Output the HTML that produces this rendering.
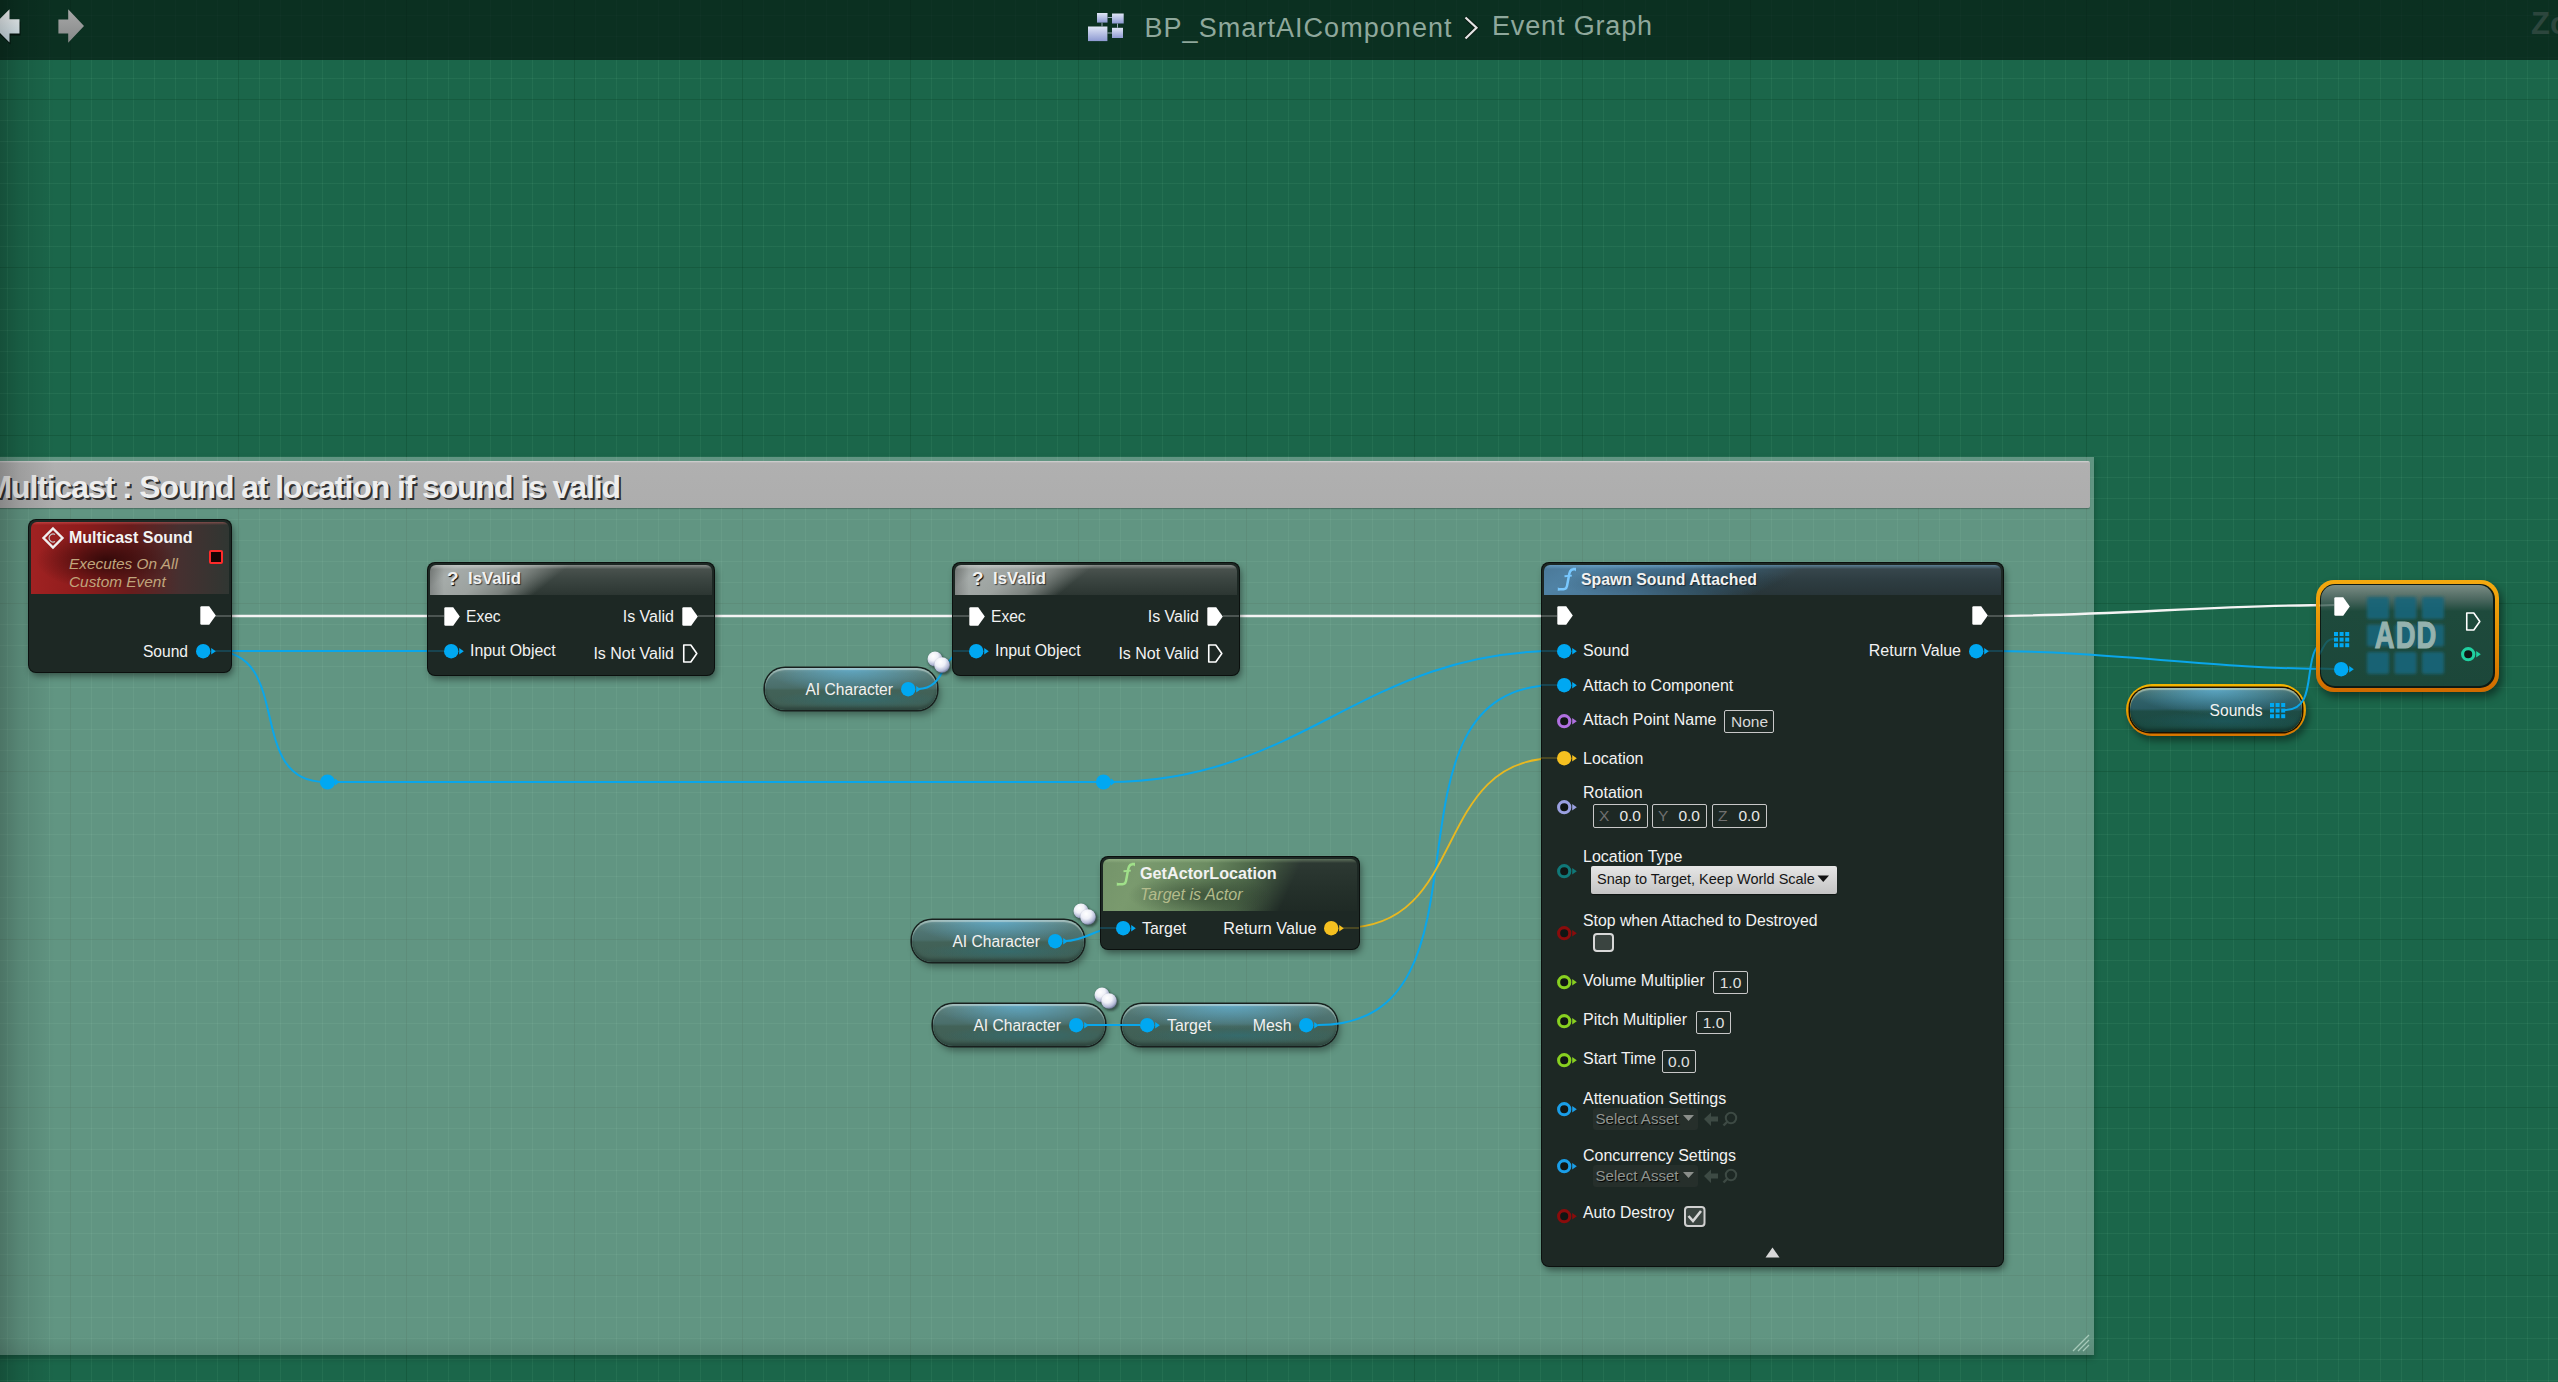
<!DOCTYPE html><html><head><meta charset="utf-8"><style>
html,body{margin:0;padding:0;}
body{width:2558px;height:1382px;overflow:hidden;position:relative;background:#1b664a;font-family:"Liberation Sans",sans-serif;}
.t{position:absolute;white-space:nowrap;}
.a{position:absolute;}
#grid{position:absolute;left:0;top:0;width:2558px;height:1382px;
 background-image:
  linear-gradient(to right, rgba(0,60,35,0.4) 0 1px, transparent 1px),
  linear-gradient(to bottom, rgba(0,60,35,0.4) 0 1px, transparent 1px),
  linear-gradient(to right, rgba(120,200,160,0.09) 0 1px, transparent 1px),
  linear-gradient(to bottom, rgba(120,200,160,0.09) 0 1px, transparent 1px);
 background-size:168px 168px,168px 168px,21px 21px,21px 21px;
 background-position:70px 0,0 99px,7px 0,0 15px;}
#vig{position:absolute;left:0;top:0;width:2558px;height:1382px;
 background:linear-gradient(to right, rgba(0,0,0,0.22), rgba(0,0,0,0.1) 20px, rgba(0,0,0,0) 55px);}
#topbar{position:absolute;left:0;top:0;width:2558px;height:60px;background:rgba(5,22,15,0.68);}
#comment{position:absolute;left:-10px;top:457px;width:2104px;height:898px;background:linear-gradient(to top,rgba(0,0,0,0.07),rgba(0,0,0,0) 20px),rgba(255,255,255,0.31);box-shadow:0 3px 6px rgba(0,0,0,0.25);}
#chead{position:absolute;left:-10px;top:461px;width:2100px;height:47px;background:linear-gradient(to bottom,#d4d4d4 0,#b0b0b0 2px,#adadad 100%);border-radius:0 2px 2px 0;box-shadow:0 1px 1px rgba(0,0,0,0.25);}
.node{position:absolute;background:#1d2824;border-radius:7px;box-shadow:0 0 0 1px #0b100e, 2px 4px 7px rgba(0,0,0,0.45);}
.hdr{position:absolute;left:2px;right:2px;top:2px;border-radius:6px 6px 0 0;}
.lbl{color:#f2f2f2;}
.box{position:absolute;border:1.5px solid #c8c8c8;border-radius:2px;box-sizing:border-box;}
.var{position:absolute;border-radius:20px;box-shadow:0 0 0 1.6px #18201e, inset 0 2px 1px rgba(215,230,225,0.5), inset 0 -3px 3px rgba(0,0,0,0.2), 3px 5px 7px rgba(0,0,0,0.35);
 background:radial-gradient(ellipse 50% 60% at 50% 0%, rgba(95,180,220,0.75), rgba(95,180,220,0) 100%),
  radial-gradient(ellipse 50% 22% at 55% 75%, rgba(40,120,135,0.45), rgba(40,120,135,0) 100%),
  linear-gradient(to bottom, #74908a 0, #5a7c76 12%, #4f7472 30%, #4a6e6a 47%, #426258 53%, #405f55 85%, #3a574e 100%);}
.var.sel{box-shadow:0 0 0 1.5px #1a1000, inset 0 2px 1px rgba(215,225,200,0.55), inset 0 -3px 3px rgba(0,0,0,0.25);
 background:radial-gradient(ellipse 50% 60% at 50% 0%, rgba(95,180,220,0.8), rgba(95,180,220,0) 100%),
  radial-gradient(ellipse 50% 22% at 55% 75%, rgba(30,100,115,0.45), rgba(30,100,115,0) 100%),
  linear-gradient(to bottom, #5a7670 0, #3e6a6a 12%, #2f6068 30%, #2a5a62 47%, #1e4c46 53%, #1b4a42 85%, #18443a 100%);}
.selring{position:absolute;border-radius:26px;background:linear-gradient(to bottom,#f4b400,#eaa000 45%,#d87400);box-shadow:3px 5px 7px rgba(0,0,0,0.4);}
svg{position:absolute;overflow:visible;}
</style></head><body><div id="grid"></div><div id="topbar"></div><svg style="left:0;top:0" width="100" height="60">
<defs><linearGradient id="la" x1="0" y1="0" x2="0" y2="1"><stop offset="0" stop-color="#ffffff"/><stop offset="1" stop-color="#c8dde6"/></linearGradient>
<linearGradient id="ra" x1="0" y1="0" x2="0" y2="1"><stop offset="0" stop-color="#a8a8a8"/><stop offset="1" stop-color="#858888"/></linearGradient></defs>
<path d="M-6,28 L9.5,42.6 L9.5,33.4 L19.5,33.4 L19.5,19.5" fill="#000" opacity="0.55" transform="translate(1,2)"/>
<path d="M-7,26 L9.5,9.2 L9.5,19.2 L19.5,19.2 L19.5,33.4 L9.5,33.4 L9.5,42.6 Z" fill="url(#la)"/>
<path d="M58.4,19.5 L68.2,19.5 L68.2,9.3 L84,26 L68.2,42.8 L68.2,33.4 L58.4,33.4 Z" fill="url(#ra)"/>
</svg><svg style="left:1086px;top:11px" width="40" height="32">
<defs><linearGradient id="ic" x1="0" y1="0" x2="0" y2="1"><stop offset="0" stop-color="#e0e6f6"/><stop offset="1" stop-color="#8e9ad2"/></linearGradient></defs>
<rect x="11" y="2" width="10.5" height="9.6" fill="url(#ic)"/>
<rect x="26" y="2.5" width="11.7" height="10" fill="url(#ic)"/>
<rect x="2" y="15.5" width="19.4" height="14.6" fill="url(#ic)"/>
<rect x="26" y="16.8" width="11" height="10.2" fill="url(#ic)"/>
<path d="M21.5,6.5 H26 M16,11.6 V15.5 M31.5,12.5 V16.8 M21.4,22 H26" stroke="#9aa8b8" stroke-width="1"/>
</svg><div class="t" style="left:1144.5px;top:15.1px;font-size:27px;line-height:27px;font-weight:400;font-style:normal;color:#8fa89c;letter-spacing:1.05px">BP_SmartAIComponent</div><svg style="left:1460px;top:14px" width="22" height="28"><path d="M5.5,3.5 L16.5,13.8 L5.5,24.5" fill="none" stroke="#0a1a12" stroke-width="4"/><path d="M5.5,3.5 L16.5,13.8 L5.5,24.5" fill="none" stroke="#e4e4e4" stroke-width="2.2"/></svg><div class="t" style="left:1492.0px;top:13.1px;font-size:27px;line-height:27px;font-weight:400;font-style:normal;color:#8fa89c;letter-spacing:0.85px">Event Graph</div><div class="t" style="left:2531.0px;top:7.8px;font-size:31px;line-height:31px;font-weight:700;font-style:normal;color:#2c463d;">Zo</div><div id="comment"></div><div id="chead"></div><div class="t" style="right:1938.0px;top:471.4px;font-size:32px;line-height:32px;font-weight:700;font-style:normal;color:#eeeeee;letter-spacing:-1.1px;text-shadow:2px 2px 0.5px rgba(30,30,30,0.9)">Multicast : Sound at location if sound is valid</div><div id="vig"></div><svg style="left:2070px;top:1333px" width="22" height="20"><path d="M3,18 L19,2 M8,18 L19,7 M13,18 L19,12" stroke="#b8d8c8" stroke-width="1.3" opacity="0.8"/></svg><div class="var" style="left:765px;top:667.5px;width:172px;height:42.5px;"></div><div class="t" style="right:1665.0px;top:681.8px;font-size:15.6px;line-height:15.6px;font-weight:400;font-style:normal;color:#f2f2f2;">AI Character</div><svg style="left:900.8px;top:681.8px" width="20.4" height="14.4"><circle cx="7.2" cy="7.2" r="7.2" fill="#00a8f2"/><path d="M15.2,3.9000000000000004 L19.8,7.2 L15.2,10.5Z" fill="#00a8f2"/></svg><div class="var" style="left:911.5px;top:919.5px;width:172.5px;height:42.5px;"></div><div class="t" style="right:1518.0px;top:933.8px;font-size:15.6px;line-height:15.6px;font-weight:400;font-style:normal;color:#f2f2f2;">AI Character</div><svg style="left:1047.8px;top:933.8px" width="20.4" height="14.4"><circle cx="7.2" cy="7.2" r="7.2" fill="#00a8f2"/><path d="M15.2,3.9000000000000004 L19.8,7.2 L15.2,10.5Z" fill="#00a8f2"/></svg><div class="var" style="left:932.5px;top:1003.5px;width:172.5px;height:42.5px;"></div><div class="t" style="right:1497.0px;top:1017.8px;font-size:15.6px;line-height:15.6px;font-weight:400;font-style:normal;color:#f2f2f2;">AI Character</div><svg style="left:1068.8px;top:1017.8px" width="20.4" height="14.4"><circle cx="7.2" cy="7.2" r="7.2" fill="#00a8f2"/><path d="M15.2,3.9000000000000004 L19.8,7.2 L15.2,10.5Z" fill="#00a8f2"/></svg><div class="var" style="left:1121.5px;top:1003.5px;width:215px;height:42.5px;"></div><svg style="left:1139.8px;top:1017.8px" width="20.4" height="14.4"><circle cx="7.2" cy="7.2" r="7.2" fill="#00a8f2"/><path d="M15.2,3.9000000000000004 L19.8,7.2 L15.2,10.5Z" fill="#00a8f2"/></svg><div class="t" style="left:1167.0px;top:1017.5px;font-size:15.9px;line-height:15.9px;font-weight:400;font-style:normal;color:#f2f2f2;">Target</div><div class="t" style="right:1266.5px;top:1017.5px;font-size:15.9px;line-height:15.9px;font-weight:400;font-style:normal;color:#f2f2f2;">Mesh</div><svg style="left:1298.8px;top:1017.8px" width="20.4" height="14.4"><circle cx="7.2" cy="7.2" r="7.2" fill="#00a8f2"/><path d="M15.2,3.9000000000000004 L19.8,7.2 L15.2,10.5Z" fill="#00a8f2"/></svg><div class="selring" style="left:2125.5px;top:683.5px;width:180.5px;height:52.0px;"></div><div class="var sel" style="left:2129.5px;top:687.5px;width:172.5px;height:44.0px;"></div><div class="t" style="right:295.5px;top:702.8px;font-size:15.6px;line-height:15.6px;font-weight:400;font-style:normal;color:#f2f2f2;">Sounds</div><svg style="left:2270px;top:703px" width="15.2" height="15.2"><rect x="0.0" y="0.0" width="4" height="4" fill="#00a8f2"/><rect x="0.0" y="5.6" width="4" height="4" fill="#00a8f2"/><rect x="0.0" y="11.2" width="4" height="4" fill="#00a8f2"/><rect x="5.6" y="0.0" width="4" height="4" fill="#00a8f2"/><rect x="5.6" y="5.6" width="4" height="4" fill="#00a8f2"/><rect x="5.6" y="11.2" width="4" height="4" fill="#00a8f2"/><rect x="11.2" y="0.0" width="4" height="4" fill="#00a8f2"/><rect x="11.2" y="5.6" width="4" height="4" fill="#00a8f2"/><rect x="11.2" y="11.2" width="4" height="4" fill="#00a8f2"/></svg><svg style="left:0;top:0" width="2558" height="1382"><path d="M215,616 C291.3333333333333,616 367.6666666666667,616 444,616" fill="none" stroke="#f4f4f4" stroke-width="2.3" /><path d="M698,616 C788.3333333333334,616 878.6666666666666,616 969,616" fill="none" stroke="#f4f4f4" stroke-width="2.3" /><path d="M1223,616 C1334.3333333333333,616 1445.6666666666667,616 1557,616" fill="none" stroke="#f4f4f4" stroke-width="2.3" /><path d="M1988,616 C2107.0,616 2215.0,605 2334,605" fill="none" stroke="#f4f4f4" stroke-width="2.3" /><path d="M214,651 C290.6666666666667,651 367.3333333333333,651 444,651" fill="none" stroke="#0aa6ea" stroke-width="2.0" /><path d="M214,651 C294.6666666666667,651 244.33333333333331,782 325,782" fill="none" stroke="#0aa6ea" stroke-width="2.0" /><path d="M330,782 C586.6666666666667,782 843.3333333333333,782 1100,782" fill="none" stroke="#0aa6ea" stroke-width="2.0" /><path d="M1108,782 C1301.3333333333333,782 1363.6666666666667,651 1557,651" fill="none" stroke="#0aa6ea" stroke-width="2.0" /><path d="M918,689 C947.6666666666666,689 939.3333333333334,651 969,651" fill="none" stroke="#0aa6ea" stroke-width="2.0" /><path d="M1065,941 C1086.3333333333333,941 1094.6666666666667,928 1116,928" fill="none" stroke="#0aa6ea" stroke-width="2.0" /><path d="M1086,1025 C1104.0,1025 1122.0,1025 1140,1025" fill="none" stroke="#0aa6ea" stroke-width="2.0" /><path d="M1318,1025 C1511.0,1025 1364.0,685 1557,685" fill="none" stroke="#0aa6ea" stroke-width="2.0" /><path d="M1343,928 C1471.0,928 1429.0,758 1557,758" fill="none" stroke="#e8b820" stroke-width="1.8" /><path d="M1987,651 C2108.6666666666665,651 2212.3333333333335,669 2334,669" fill="none" stroke="#0aa6ea" stroke-width="2.0" /><path d="M2285,710 C2325.0,710 2294.0,639 2334,639" fill="none" stroke="#0aa6ea" stroke-width="2.0" /><circle cx="327.5" cy="782" r="7.6" fill="#00a8f2"/><path d="M335,778.5 L339.5,782 L335,785.5Z" fill="#00a8f2"/><circle cx="1103.5" cy="782" r="7.6" fill="#00a8f2"/><path d="M1111,778.5 L1115.5,782 L1111,785.5Z" fill="#00a8f2"/></svg><div class="node" style="left:29px;top:520px;width:202px;height:151.5px;"><div class="hdr" style="height:72px;background:linear-gradient(to bottom, rgba(255,120,120,0.35) 0, rgba(255,120,120,0) 3px),radial-gradient(ellipse 70px 30px at 75px 38px, rgba(35,5,5,0.8), rgba(35,5,5,0) 100%),linear-gradient(to right, #a02222 0%, #8e1c1c 25%, #6a1c1c 50%, #463030 75%, #303632 100%)"></div></div><svg style="left:42px;top:527px" width="22" height="22"><path d="M11,1.5 L20.5,11 L11,20.5 L1.5,11Z" fill="none" stroke="#f0f0f0" stroke-width="2.4"/><path d="M13,7.5 A4,4 0 1 0 13,14.5" fill="none" stroke="#c8c8c8" stroke-width="1.3"/></svg><div class="t" style="left:69.0px;top:529.5px;font-size:16px;line-height:16px;font-weight:700;font-style:normal;color:#f4f4f4;">Multicast Sound</div><div class="t" style="left:69.0px;top:556.0px;font-size:15.4px;line-height:15.4px;font-weight:400;font-style:italic;color:#c0a57c;">Executes On All</div><div class="t" style="left:69.0px;top:574.0px;font-size:15.4px;line-height:15.4px;font-weight:400;font-style:italic;color:#c0a57c;">Custom Event</div><div class="a" style="left:209px;top:550px;width:14px;height:14px;box-sizing:border-box;border:2.5px solid #ff2a2a;background:#1a0505;border-radius:2px"></div><svg style="left:200px;top:606px" width="16" height="19"><path d="M1.5,0.3 L9.2,0.3 L15.8,9.5 L9.2,18.7 L1.5,18.7 Q0.3,18.7 0.3,17.5 L0.3,1.5 Q0.3,0.3 1.5,0.3Z" fill="#fff"/></svg><div class="t" style="right:2370.0px;top:643.8px;font-size:15.6px;line-height:15.6px;font-weight:400;font-style:normal;color:#f2f2f2;">Sound</div><svg style="left:195.8px;top:643.8px" width="20.4" height="14.4"><circle cx="7.2" cy="7.2" r="7.2" fill="#00a8f2"/><path d="M15.2,3.9000000000000004 L19.8,7.2 L15.2,10.5Z" fill="#00a8f2"/></svg><div class="node" style="left:428px;top:562.5px;width:286px;height:112.0px;"><div class="hdr" style="height:30px;background:linear-gradient(to bottom, rgba(255,255,255,0.32) 0, rgba(255,255,255,0.1) 3px, rgba(255,255,255,0) 4px),linear-gradient(to right, rgba(0,0,0,0.22), rgba(0,0,0,0) 14px),linear-gradient(141deg, #8e9491 0%, #a6acaa 9%, #9ca29f 22%, #7a817d 33%, rgba(74,82,78,0) 44%),linear-gradient(to bottom, #4e5652 0%, #3c4642 45%, #2c3632 100%)"></div></div><div class="t" style="left:447.0px;top:569.4px;font-size:19px;line-height:19px;font-weight:700;font-style:normal;color:#f0f0f0;text-shadow:1px 1px 1px #000">?</div><div class="t" style="left:468.0px;top:571.4px;font-size:16.7px;line-height:16.7px;font-weight:700;font-style:normal;color:#f2f2f2;text-shadow:1px 1px 1px rgba(0,0,0,0.6)">IsValid</div><svg style="left:444px;top:607.0px" width="16" height="19"><path d="M1.5,0.3 L9.2,0.3 L15.8,9.5 L9.2,18.7 L1.5,18.7 Q0.3,18.7 0.3,17.5 L0.3,1.5 Q0.3,0.3 1.5,0.3Z" fill="#fff"/></svg><div class="t" style="left:466.0px;top:609.1px;font-size:15.6px;line-height:15.6px;font-weight:400;font-style:normal;color:#f2f2f2;">Exec</div><div class="t" style="right:1884.0px;top:608.8px;font-size:16px;line-height:16px;font-weight:400;font-style:normal;color:#f2f2f2;">Is Valid</div><svg style="left:682px;top:607.0px" width="16" height="19"><path d="M1.5,0.3 L9.2,0.3 L15.8,9.5 L9.2,18.7 L1.5,18.7 Q0.3,18.7 0.3,17.5 L0.3,1.5 Q0.3,0.3 1.5,0.3Z" fill="#fff"/></svg><svg style="left:444.0px;top:644.3px" width="20.4" height="14.4"><circle cx="7.2" cy="7.2" r="7.2" fill="#00a8f2"/><path d="M15.2,3.9000000000000004 L19.8,7.2 L15.2,10.5Z" fill="#00a8f2"/></svg><div class="t" style="left:470.0px;top:643.4px;font-size:15.9px;line-height:15.9px;font-weight:400;font-style:normal;color:#f2f2f2;">Input Object</div><div class="t" style="right:1884.0px;top:645.8px;font-size:16px;line-height:16px;font-weight:400;font-style:normal;color:#f2f2f2;">Is Not Valid</div><svg style="left:682px;top:644.0px" width="16" height="19"><path d="M1.75,1 L8.8,1 L14.8,9.5 L8.8,18 L1.75,18 L1.75,1Z" fill="none" stroke="#fff" stroke-width="1.6" stroke-linejoin="round"/></svg><div class="node" style="left:953px;top:562.5px;width:286px;height:112.0px;"><div class="hdr" style="height:30px;background:linear-gradient(to bottom, rgba(255,255,255,0.32) 0, rgba(255,255,255,0.1) 3px, rgba(255,255,255,0) 4px),linear-gradient(to right, rgba(0,0,0,0.22), rgba(0,0,0,0) 14px),linear-gradient(141deg, #8e9491 0%, #a6acaa 9%, #9ca29f 22%, #7a817d 33%, rgba(74,82,78,0) 44%),linear-gradient(to bottom, #4e5652 0%, #3c4642 45%, #2c3632 100%)"></div></div><div class="t" style="left:972.0px;top:569.4px;font-size:19px;line-height:19px;font-weight:700;font-style:normal;color:#f0f0f0;text-shadow:1px 1px 1px #000">?</div><div class="t" style="left:993.0px;top:571.4px;font-size:16.7px;line-height:16.7px;font-weight:700;font-style:normal;color:#f2f2f2;text-shadow:1px 1px 1px rgba(0,0,0,0.6)">IsValid</div><svg style="left:969px;top:607.0px" width="16" height="19"><path d="M1.5,0.3 L9.2,0.3 L15.8,9.5 L9.2,18.7 L1.5,18.7 Q0.3,18.7 0.3,17.5 L0.3,1.5 Q0.3,0.3 1.5,0.3Z" fill="#fff"/></svg><div class="t" style="left:991.0px;top:609.1px;font-size:15.6px;line-height:15.6px;font-weight:400;font-style:normal;color:#f2f2f2;">Exec</div><div class="t" style="right:1359.0px;top:608.8px;font-size:16px;line-height:16px;font-weight:400;font-style:normal;color:#f2f2f2;">Is Valid</div><svg style="left:1207px;top:607.0px" width="16" height="19"><path d="M1.5,0.3 L9.2,0.3 L15.8,9.5 L9.2,18.7 L1.5,18.7 Q0.3,18.7 0.3,17.5 L0.3,1.5 Q0.3,0.3 1.5,0.3Z" fill="#fff"/></svg><svg style="left:969.0px;top:644.3px" width="20.4" height="14.4"><circle cx="7.2" cy="7.2" r="7.2" fill="#00a8f2"/><path d="M15.2,3.9000000000000004 L19.8,7.2 L15.2,10.5Z" fill="#00a8f2"/></svg><div class="t" style="left:995.0px;top:643.4px;font-size:15.9px;line-height:15.9px;font-weight:400;font-style:normal;color:#f2f2f2;">Input Object</div><div class="t" style="right:1359.0px;top:645.8px;font-size:16px;line-height:16px;font-weight:400;font-style:normal;color:#f2f2f2;">Is Not Valid</div><svg style="left:1207px;top:644.0px" width="16" height="19"><path d="M1.75,1 L8.8,1 L14.8,9.5 L8.8,18 L1.75,18 L1.75,1Z" fill="none" stroke="#fff" stroke-width="1.6" stroke-linejoin="round"/></svg><svg style="left:927px;top:651px" width="28" height="26"><defs><radialGradient id="kb" cx="0.38" cy="0.3" r="0.72"><stop offset="0" stop-color="#ffffff"/><stop offset="0.45" stop-color="#eef0f8"/><stop offset="0.8" stop-color="#b4bad6"/><stop offset="1" stop-color="#70789a"/></radialGradient><filter id="kbs"><feGaussianBlur stdDeviation="0.9"/></filter></defs><circle cx="9" cy="9.5" r="8.2" fill="#1c2a26" opacity="0.55" filter="url(#kbs)"/><circle cx="8" cy="8" r="7.5" fill="url(#kb)"/><circle cx="16.5" cy="15.5" r="8.6" fill="#1c2a26" opacity="0.6" filter="url(#kbs)"/><circle cx="15" cy="14" r="7.8" fill="url(#kb)"/></svg><svg style="left:1073px;top:903px" width="28" height="26"><defs><radialGradient id="kb" cx="0.38" cy="0.3" r="0.72"><stop offset="0" stop-color="#ffffff"/><stop offset="0.45" stop-color="#eef0f8"/><stop offset="0.8" stop-color="#b4bad6"/><stop offset="1" stop-color="#70789a"/></radialGradient><filter id="kbs"><feGaussianBlur stdDeviation="0.9"/></filter></defs><circle cx="9" cy="9.5" r="8.2" fill="#1c2a26" opacity="0.55" filter="url(#kbs)"/><circle cx="8" cy="8" r="7.5" fill="url(#kb)"/><circle cx="16.5" cy="15.5" r="8.6" fill="#1c2a26" opacity="0.6" filter="url(#kbs)"/><circle cx="15" cy="14" r="7.8" fill="url(#kb)"/></svg><svg style="left:1094px;top:987px" width="28" height="26"><defs><radialGradient id="kb" cx="0.38" cy="0.3" r="0.72"><stop offset="0" stop-color="#ffffff"/><stop offset="0.45" stop-color="#eef0f8"/><stop offset="0.8" stop-color="#b4bad6"/><stop offset="1" stop-color="#70789a"/></radialGradient><filter id="kbs"><feGaussianBlur stdDeviation="0.9"/></filter></defs><circle cx="9" cy="9.5" r="8.2" fill="#1c2a26" opacity="0.55" filter="url(#kbs)"/><circle cx="8" cy="8" r="7.5" fill="url(#kb)"/><circle cx="16.5" cy="15.5" r="8.6" fill="#1c2a26" opacity="0.6" filter="url(#kbs)"/><circle cx="15" cy="14" r="7.8" fill="url(#kb)"/></svg><div class="node" style="left:1100.5px;top:856.5px;width:258.5px;height:92.0px;"><div class="hdr" style="height:52px;background:linear-gradient(to bottom, rgba(200,230,180,0.3) 0, rgba(200,230,180,0.08) 3px, rgba(200,230,180,0) 4px),radial-gradient(ellipse 70px 22px at 95px 36px, rgba(25,40,28,0.5), rgba(25,40,28,0) 100%),linear-gradient(115deg, #74946a 0%, #7a9a6e 15%, #6c8c62 38%, #4c6648 55%, rgba(32,44,38,0) 72%),linear-gradient(to bottom, #2e3a34 0%, #24302a 60%, #1f2a25 100%)"></div></div><svg style="left:1115px;top:861px" width="24" height="26"><path d="M19.5,3.3 C16,2.6 14,4 13.3,7.8 L11,20 C10.4,23 8.8,23.6 3,23.3" fill="none" stroke="#a0e08a" stroke-width="2.5"/><path d="M16.5,1.8 L20,1.8 L20,5.6Z M1.8,21.3 L5,23.4 L1.8,25Z" fill="#a0e08a"/><path d="M8.5,10.2 L15.8,9.6" stroke="#a0e08a" stroke-width="1.9"/></svg><div class="t" style="left:1140.0px;top:865.3px;font-size:16.2px;line-height:16.2px;font-weight:700;font-style:normal;color:#f2f2f2;">GetActorLocation</div><div class="t" style="left:1140.0px;top:886.4px;font-size:16.1px;line-height:16.1px;font-weight:400;font-style:italic;color:#b4bc8c;">Target is Actor</div><svg style="left:1115.8px;top:920.8px" width="20.4" height="14.4"><circle cx="7.2" cy="7.2" r="7.2" fill="#00a8f2"/><path d="M15.2,3.9000000000000004 L19.8,7.2 L15.2,10.5Z" fill="#00a8f2"/></svg><div class="t" style="left:1142.0px;top:920.5px;font-size:15.9px;line-height:15.9px;font-weight:400;font-style:normal;color:#f2f2f2;">Target</div><div class="t" style="right:1241.5px;top:920.3px;font-size:16.2px;line-height:16.2px;font-weight:400;font-style:normal;color:#f2f2f2;">Return Value</div><svg style="left:1323.8px;top:920.8px" width="20.4" height="14.4"><circle cx="7.2" cy="7.2" r="7.2" fill="#f5c020"/><path d="M15.2,3.9000000000000004 L19.8,7.2 L15.2,10.5Z" fill="#f5c020"/></svg><div class="node" style="left:1541.5px;top:562.5px;width:461.0px;height:703.0px;"><div class="hdr" style="height:30px;background:linear-gradient(to bottom, rgba(130,190,230,0.45) 0, rgba(130,190,230,0.12) 3px, rgba(130,190,230,0) 4px),radial-gradient(ellipse 120px 16px at 130px 17px, rgba(20,40,50,0.35), rgba(20,40,50,0) 100%),linear-gradient(152deg, #4a7898 0%, #5082a4 10%, #46708e 28%, #365668 40%, rgba(46,62,68,0) 52%),linear-gradient(to bottom, #3a4a50 0%, #2e3d42 50%, #283538 100%)"></div></div><svg style="left:1556px;top:566px" width="24" height="26"><path d="M19.5,3.3 C16,2.6 14,4 13.3,7.8 L11,20 C10.4,23 8.8,23.6 3,23.3" fill="none" stroke="#78c8ff" stroke-width="2.5"/><path d="M16.5,1.8 L20,1.8 L20,5.6Z M1.8,21.3 L5,23.4 L1.8,25Z" fill="#78c8ff"/><path d="M8.5,10.2 L15.8,9.6" stroke="#78c8ff" stroke-width="1.9"/></svg><div class="t" style="left:1581.0px;top:571.6px;font-size:15.8px;line-height:15.8px;font-weight:700;font-style:normal;color:#f2f2f2;text-shadow:1px 1px 1px rgba(0,0,0,0.5)">Spawn Sound Attached</div><svg style="left:1557px;top:606px" width="16" height="19"><path d="M1.5,0.3 L9.2,0.3 L15.8,9.5 L9.2,18.7 L1.5,18.7 Q0.3,18.7 0.3,17.5 L0.3,1.5 Q0.3,0.3 1.5,0.3Z" fill="#fff"/></svg><svg style="left:1972px;top:606px" width="16" height="19"><path d="M1.5,0.3 L9.2,0.3 L15.8,9.5 L9.2,18.7 L1.5,18.7 Q0.3,18.7 0.3,17.5 L0.3,1.5 Q0.3,0.3 1.5,0.3Z" fill="#fff"/></svg><svg style="left:1557.3px;top:643.8px" width="20.4" height="14.4"><circle cx="7.2" cy="7.2" r="7.2" fill="#00a8f2"/><path d="M15.2,3.9000000000000004 L19.8,7.2 L15.2,10.5Z" fill="#00a8f2"/></svg><div class="t" style="left:1583.0px;top:643.0px;font-size:16px;line-height:16px;font-weight:400;font-style:normal;color:#f2f2f2;">Sound</div><svg style="left:1557.3px;top:677.8px" width="20.4" height="14.4"><circle cx="7.2" cy="7.2" r="7.2" fill="#00a8f2"/><path d="M15.2,3.9000000000000004 L19.8,7.2 L15.2,10.5Z" fill="#00a8f2"/></svg><div class="t" style="left:1583.0px;top:677.5px;font-size:16px;line-height:16px;font-weight:400;font-style:normal;color:#f2f2f2;">Attach to Component</div><svg style="left:1557.3px;top:714.3px" width="20.4" height="14.4"><circle cx="7.2" cy="7.2" r="5.6" fill="#101614" stroke="#b070e0" stroke-width="3.1"/><path d="M15.2,3.9000000000000004 L19.8,7.2 L15.2,10.5Z" fill="#b070e0"/></svg><div class="t" style="left:1583.0px;top:712.0px;font-size:16px;line-height:16px;font-weight:400;font-style:normal;color:#f2f2f2;">Attach Point Name</div><svg style="left:1557.3px;top:750.8px" width="20.4" height="14.4"><circle cx="7.2" cy="7.2" r="7.2" fill="#f5c020"/><path d="M15.2,3.9000000000000004 L19.8,7.2 L15.2,10.5Z" fill="#f5c020"/></svg><div class="t" style="left:1583.0px;top:751.0px;font-size:16px;line-height:16px;font-weight:400;font-style:normal;color:#f2f2f2;">Location</div><div class="t" style="right:597.0px;top:643.0px;font-size:16px;line-height:16px;font-weight:400;font-style:normal;color:#f2f2f2;">Return Value</div><svg style="left:1968.8px;top:643.8px" width="20.4" height="14.4"><circle cx="7.2" cy="7.2" r="7.2" fill="#00a8f2"/><path d="M15.2,3.9000000000000004 L19.8,7.2 L15.2,10.5Z" fill="#00a8f2"/></svg><div class="box" style="left:1724px;top:710px;width:50px;height:23px;"></div><div class="t" style="left:1731.0px;top:713.9px;font-size:15.5px;line-height:15.5px;font-weight:400;font-style:normal;color:#d8d8d8;">None</div><div class="t" style="left:1583.0px;top:785.0px;font-size:16px;line-height:16px;font-weight:400;font-style:normal;color:#f2f2f2;">Rotation</div><svg style="left:1557.3px;top:799.8px" width="20.4" height="14.4"><circle cx="7.2" cy="7.2" r="5.6" fill="#101614" stroke="#9aa0e0" stroke-width="3.1"/><path d="M15.2,3.9000000000000004 L19.8,7.2 L15.2,10.5Z" fill="#9aa0e0"/></svg><div class="box" style="left:1593px;top:803.5px;width:55px;height:24.5px;"></div><div class="t" style="left:1599.0px;top:808.4px;font-size:15.5px;line-height:15.5px;font-weight:400;font-style:normal;color:#707070;">X</div><div class="t" style="right:917.0px;top:808.4px;font-size:15.5px;line-height:15.5px;font-weight:400;font-style:normal;color:#e8e8e8;">0.0</div><div class="box" style="left:1652px;top:803.5px;width:55px;height:24.5px;"></div><div class="t" style="left:1658.0px;top:808.4px;font-size:15.5px;line-height:15.5px;font-weight:400;font-style:normal;color:#707070;">Y</div><div class="t" style="right:858.0px;top:808.4px;font-size:15.5px;line-height:15.5px;font-weight:400;font-style:normal;color:#e8e8e8;">0.0</div><div class="box" style="left:1712px;top:803.5px;width:55px;height:24.5px;"></div><div class="t" style="left:1718.0px;top:808.4px;font-size:15.5px;line-height:15.5px;font-weight:400;font-style:normal;color:#707070;">Z</div><div class="t" style="right:798.0px;top:808.4px;font-size:15.5px;line-height:15.5px;font-weight:400;font-style:normal;color:#e8e8e8;">0.0</div><div class="t" style="left:1583.0px;top:848.5px;font-size:16px;line-height:16px;font-weight:400;font-style:normal;color:#f2f2f2;">Location Type</div><svg style="left:1557.3px;top:863.8px" width="20.4" height="14.4"><circle cx="7.2" cy="7.2" r="5.6" fill="#101614" stroke="#107878" stroke-width="3.1"/><path d="M15.2,3.9000000000000004 L19.8,7.2 L15.2,10.5Z" fill="#107878"/></svg><div class="a" style="left:1591px;top:866px;width:246px;height:28px;border-radius:2px;background:linear-gradient(to bottom,#e6e6e6,#c4c4c4);box-shadow:0 1px 1px rgba(0,0,0,0.5)"></div><div class="t" style="left:1597.0px;top:872.2px;font-size:14.5px;line-height:14.5px;font-weight:400;font-style:normal;color:#151515;">Snap to Target, Keep World Scale</div><svg style="left:1817px;top:875px" width="13" height="8"><path d="M0.5,0.5 L12,0.5 L6.25,7Z" fill="#111"/></svg><div class="t" style="left:1583.0px;top:912.6px;font-size:15.8px;line-height:15.8px;font-weight:400;font-style:normal;color:#f2f2f2;">Stop when Attached to Destroyed</div><svg style="left:1557.3px;top:925.8px" width="20.4" height="14.4"><circle cx="7.2" cy="7.2" r="5.6" fill="#101614" stroke="#8a0c0c" stroke-width="3.1"/><path d="M15.2,3.9000000000000004 L19.8,7.2 L15.2,10.5Z" fill="#8a0c0c"/></svg><div class="a" style="left:1593px;top:932.5px;width:20.5px;height:19.5px;box-sizing:border-box;border:2px solid #d8d8d8;border-radius:4px;background:#3a4440"></div><svg style="left:1557.3px;top:974.8px" width="20.4" height="14.4"><circle cx="7.2" cy="7.2" r="5.6" fill="#101614" stroke="#88d020" stroke-width="3.1"/><path d="M15.2,3.9000000000000004 L19.8,7.2 L15.2,10.5Z" fill="#88d020"/></svg><div class="t" style="left:1583.0px;top:972.5px;font-size:16px;line-height:16px;font-weight:400;font-style:normal;color:#f2f2f2;">Volume Multiplier</div><div class="box" style="left:1713px;top:971px;width:35px;height:23px;"></div><div class="t" style="left:1730.5px;top:975.4px;font-size:15.5px;line-height:15.5px;font-weight:400;font-style:normal;color:#e0e0e0;transform:translateX(-50%)">1.0</div><svg style="left:1557.3px;top:1013.8px" width="20.4" height="14.4"><circle cx="7.2" cy="7.2" r="5.6" fill="#101614" stroke="#88d020" stroke-width="3.1"/><path d="M15.2,3.9000000000000004 L19.8,7.2 L15.2,10.5Z" fill="#88d020"/></svg><div class="t" style="left:1583.0px;top:1012.0px;font-size:16px;line-height:16px;font-weight:400;font-style:normal;color:#f2f2f2;">Pitch Multiplier</div><div class="box" style="left:1696px;top:1010.5px;width:35px;height:23px;"></div><div class="t" style="left:1713.5px;top:1014.9px;font-size:15.5px;line-height:15.5px;font-weight:400;font-style:normal;color:#e0e0e0;transform:translateX(-50%)">1.0</div><svg style="left:1557.3px;top:1052.8px" width="20.4" height="14.4"><circle cx="7.2" cy="7.2" r="5.6" fill="#101614" stroke="#88d020" stroke-width="3.1"/><path d="M15.2,3.9000000000000004 L19.8,7.2 L15.2,10.5Z" fill="#88d020"/></svg><div class="t" style="left:1583.0px;top:1050.5px;font-size:16px;line-height:16px;font-weight:400;font-style:normal;color:#f2f2f2;">Start Time</div><div class="box" style="left:1661.5px;top:1049.5px;width:34.5px;height:23px;"></div><div class="t" style="left:1678.8px;top:1053.9px;font-size:15.5px;line-height:15.5px;font-weight:400;font-style:normal;color:#e0e0e0;transform:translateX(-50%)">0.0</div><svg style="left:1557.3px;top:1102.3px" width="20.4" height="14.4"><circle cx="7.2" cy="7.2" r="5.6" fill="#101614" stroke="#1a9ee8" stroke-width="3.1"/><path d="M15.2,3.9000000000000004 L19.8,7.2 L15.2,10.5Z" fill="#1a9ee8"/></svg><div class="t" style="left:1583.0px;top:1090.5px;font-size:16px;line-height:16px;font-weight:400;font-style:normal;color:#f2f2f2;">Attenuation Settings</div><div class="a" style="left:1593px;top:1107.5px;width:105px;height:22px;border-radius:3px;background:#262f2b"></div><div class="t" style="left:1595.5px;top:1111.2px;font-size:15.1px;line-height:15.1px;font-weight:400;font-style:normal;color:#909590;text-shadow:1px 1px 1px #000">Select Asset</div><svg style="left:1683px;top:1115.0px" width="12" height="7"><path d="M0,0 L11,0 L5.5,6Z" fill="#8a8e8a"/></svg><svg style="left:1703px;top:1110.5px" width="38" height="18"><path d="M1,8 L8,1.5 L8,5.5 L15,5.5 L15,10.5 L8,10.5 L8,15Z" fill="#3d4a44"/><circle cx="28" cy="7" r="5.2" fill="none" stroke="#3d4a44" stroke-width="2"/><path d="M24.5,10.5 L20.5,14.5" stroke="#3d4a44" stroke-width="2.4"/></svg><svg style="left:1557.3px;top:1159.3px" width="20.4" height="14.4"><circle cx="7.2" cy="7.2" r="5.6" fill="#101614" stroke="#1a9ee8" stroke-width="3.1"/><path d="M15.2,3.9000000000000004 L19.8,7.2 L15.2,10.5Z" fill="#1a9ee8"/></svg><div class="t" style="left:1583.0px;top:1147.5px;font-size:16px;line-height:16px;font-weight:400;font-style:normal;color:#f2f2f2;">Concurrency Settings</div><div class="a" style="left:1593px;top:1164.5px;width:105px;height:22px;border-radius:3px;background:#262f2b"></div><div class="t" style="left:1595.5px;top:1168.2px;font-size:15.1px;line-height:15.1px;font-weight:400;font-style:normal;color:#909590;text-shadow:1px 1px 1px #000">Select Asset</div><svg style="left:1683px;top:1172.0px" width="12" height="7"><path d="M0,0 L11,0 L5.5,6Z" fill="#8a8e8a"/></svg><svg style="left:1703px;top:1167.5px" width="38" height="18"><path d="M1,8 L8,1.5 L8,5.5 L15,5.5 L15,10.5 L8,10.5 L8,15Z" fill="#3d4a44"/><circle cx="28" cy="7" r="5.2" fill="none" stroke="#3d4a44" stroke-width="2"/><path d="M24.5,10.5 L20.5,14.5" stroke="#3d4a44" stroke-width="2.4"/></svg><div class="t" style="left:1583.0px;top:1205.1px;font-size:15.8px;line-height:15.8px;font-weight:400;font-style:normal;color:#f2f2f2;">Auto Destroy</div><svg style="left:1557.3px;top:1208.8px" width="20.4" height="14.4"><circle cx="7.2" cy="7.2" r="5.6" fill="#101614" stroke="#8a0c0c" stroke-width="3.1"/><path d="M15.2,3.9000000000000004 L19.8,7.2 L15.2,10.5Z" fill="#8a0c0c"/></svg><svg style="left:1684px;top:1205.5px" width="22" height="21"><rect x="1" y="1" width="19.5" height="19" rx="3" fill="#3a4440" stroke="#d0d0d0" stroke-width="2"/><path d="M4.5,10 L9,15 L17,5" fill="none" stroke="#d8d8d8" stroke-width="2.6"/></svg><svg style="left:1765px;top:1247px" width="16" height="11"><path d="M0.5,10.5 L7.5,0.5 L14.5,10.5Z" fill="#d8d8d8"/></svg><div class="a" style="left:2315.5px;top:579.5px;width:183px;height:112px;border-radius:18px;background:linear-gradient(to bottom,#f4aa10,#e08a00 60%,#d06a00);box-shadow:3px 5px 8px rgba(0,0,0,0.45)"></div><div class="a" style="left:2319.5px;top:583.5px;width:175px;height:104px;border-radius:15px;background:#0d1a14"></div><div class="a" style="left:2321px;top:585px;width:172px;height:101px;border-radius:14px;background:linear-gradient(to bottom,#7a8c84 0,#4c6860 14%,#1e4a3c 26%,#1c473a 100%)"></div><svg style="left:2365px;top:595px" width="84" height="84"><filter id="bl"><feGaussianBlur stdDeviation="1.6"/></filter><g filter="url(#bl)"><rect x="2.0" y="2.0" width="22" height="22" rx="2" fill="#14657a" opacity="0.9"/><rect x="2.0" y="29.5" width="22" height="22" rx="2" fill="#14657a" opacity="0.9"/><rect x="2.0" y="57.0" width="22" height="22" rx="2" fill="#14657a" opacity="0.9"/><rect x="29.5" y="2.0" width="22" height="22" rx="2" fill="#14657a" opacity="0.9"/><rect x="29.5" y="29.5" width="22" height="22" rx="2" fill="#14657a" opacity="0.9"/><rect x="29.5" y="57.0" width="22" height="22" rx="2" fill="#14657a" opacity="0.9"/><rect x="57.0" y="2.0" width="22" height="22" rx="2" fill="#14657a" opacity="0.9"/><rect x="57.0" y="29.5" width="22" height="22" rx="2" fill="#14657a" opacity="0.9"/><rect x="57.0" y="57.0" width="22" height="22" rx="2" fill="#14657a" opacity="0.9"/></g></svg><div class="t" style="left:2415.5px;top:618.0px;font-size:36px;line-height:36px;font-weight:700;font-style:normal;color:#95b2ae;transform:translateX(-50%) scaleX(0.76);transform-origin:0 0;letter-spacing:1.5px;-webkit-text-stroke:1.2px #95b2ae">ADD</div><svg style="left:2334px;top:596.5px" width="16" height="19"><path d="M1.5,0.3 L9.2,0.3 L15.8,9.5 L9.2,18.7 L1.5,18.7 Q0.3,18.7 0.3,17.5 L0.3,1.5 Q0.3,0.3 1.5,0.3Z" fill="#fff"/></svg><svg style="left:2334px;top:632px" width="15.2" height="15.2"><rect x="0.0" y="0.0" width="4" height="4" fill="#00a8f2"/><rect x="0.0" y="5.6" width="4" height="4" fill="#00a8f2"/><rect x="0.0" y="11.2" width="4" height="4" fill="#00a8f2"/><rect x="5.6" y="0.0" width="4" height="4" fill="#00a8f2"/><rect x="5.6" y="5.6" width="4" height="4" fill="#00a8f2"/><rect x="5.6" y="11.2" width="4" height="4" fill="#00a8f2"/><rect x="11.2" y="0.0" width="4" height="4" fill="#00a8f2"/><rect x="11.2" y="5.6" width="4" height="4" fill="#00a8f2"/><rect x="11.2" y="11.2" width="4" height="4" fill="#00a8f2"/></svg><svg style="left:2333.8px;top:661.8px" width="20.4" height="14.4"><circle cx="7.2" cy="7.2" r="7.2" fill="#00a8f2"/><path d="M15.2,3.9000000000000004 L19.8,7.2 L15.2,10.5Z" fill="#00a8f2"/></svg><svg style="left:2465px;top:611.5px" width="16" height="19"><path d="M1.75,1 L8.8,1 L14.8,9.5 L8.8,18 L1.75,18 L1.75,1Z" fill="none" stroke="#fff" stroke-width="1.6" stroke-linejoin="round"/></svg><svg style="left:2461.3px;top:646.8px" width="20.4" height="14.4"><circle cx="7.2" cy="7.2" r="5.6" fill="#101614" stroke="#20d0a0" stroke-width="3.1"/><path d="M15.2,3.9000000000000004 L19.8,7.2 L15.2,10.5Z" fill="#20d0a0"/></svg><svg style="left:0;top:0;opacity:0.22" width="2558" height="1382"><path d="M215,616 L231,616" stroke="#f4f4f4" stroke-width="2"/><path d="M214,651 L231,651" stroke="#0aa6ea" stroke-width="2"/><path d="M428,616 L444,616" stroke="#f4f4f4" stroke-width="2"/><path d="M428,651 L444,651" stroke="#0aa6ea" stroke-width="2"/><path d="M698,616 L714,616" stroke="#f4f4f4" stroke-width="2"/><path d="M953,616 L969,616" stroke="#f4f4f4" stroke-width="2"/><path d="M953,651 L969,651" stroke="#0aa6ea" stroke-width="2"/><path d="M1223,616 L1239,616" stroke="#f4f4f4" stroke-width="2"/><path d="M1541,616 L1557,616" stroke="#f4f4f4" stroke-width="2"/><path d="M1541,651 L1557,651" stroke="#0aa6ea" stroke-width="2"/><path d="M1541,685 L1557,685" stroke="#0aa6ea" stroke-width="2"/><path d="M1541,758 L1557,758" stroke="#e8b820" stroke-width="2"/><path d="M1988,616 L2003,616" stroke="#f4f4f4" stroke-width="2"/><path d="M1987,651 L2003,651" stroke="#0aa6ea" stroke-width="2"/><path d="M1100,928 L1116,928" stroke="#0aa6ea" stroke-width="2"/><path d="M1343,928 L1359,928" stroke="#e8b820" stroke-width="2"/><path d="M2319,605.5 L2334,605" stroke="#f4f4f4" stroke-width="2"/><path d="M2319,668.5 L2334,669" stroke="#0aa6ea" stroke-width="2"/><path d="M2319,655 C2325,645 2326,639 2334,639" fill="none" stroke="#0aa6ea" stroke-width="2"/></svg></body></html>
